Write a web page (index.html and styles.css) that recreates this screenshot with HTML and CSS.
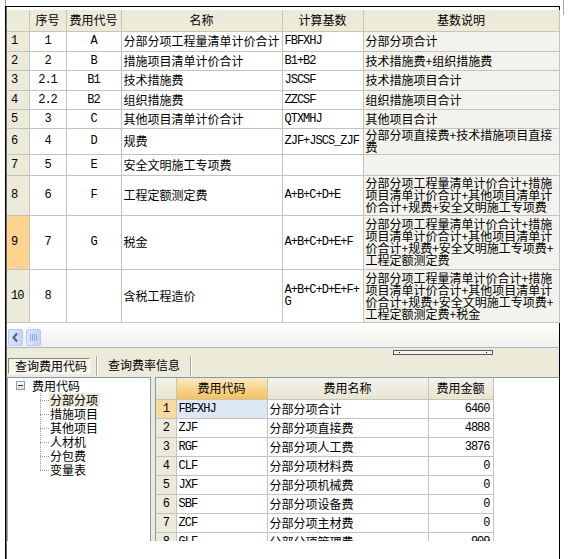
FILE: index.html
```html
<!DOCTYPE html>
<html>
<head>
<meta charset="utf-8">
<link rel="stylesheet" href="styles.css">
</head>
<body>
<div class="frame">
  <table class="main">
    <colgroup>
      <col class="w22"><col class="w37"><col class="w55"><col class="w161"><col class="w81"><col class="w196">
    </colgroup>
    <thead>
      <tr class="hh"><th class="rn"></th><th>序号</th><th>费用代号</th><th>名称</th><th>计算基数</th><th>基数说明</th></tr>
    </thead>
    <tbody>
      <tr class="h20"><td class="rn mono">1</td><td class="mono c">1</td><td class="mono c">A</td><td>分部分项工程量清单计价合计</td><td class="mono">FBFXHJ</td><td class="desc">分部分项合计</td></tr>
      <tr class="h19"><td class="rn mono">2</td><td class="mono c">2</td><td class="mono c">B</td><td>措施项目清单计价合计</td><td class="mono">B1+B2</td><td class="desc">技术措施费+组织措施费</td></tr>
      <tr class="h20"><td class="rn mono">3</td><td class="mono c">2.1</td><td class="mono c">B1</td><td>技术措施费</td><td class="mono">JSCSF</td><td class="desc">技术措施项目合计</td></tr>
      <tr class="h19"><td class="rn mono">4</td><td class="mono c">2.2</td><td class="mono c">B2</td><td>组织措施费</td><td class="mono">ZZCSF</td><td class="desc">组织措施项目合计</td></tr>
      <tr class="h19"><td class="rn mono">5</td><td class="mono c">3</td><td class="mono c">C</td><td>其他项目清单计价合计</td><td class="mono">QTXMHJ</td><td class="desc">其他项目合计</td></tr>
      <tr class="h26"><td class="rn mono">6</td><td class="mono c">4</td><td class="mono c">D</td><td>规费</td><td class="mono">ZJF+JSCS_ZJF</td><td class="desc">分部分项直接费+技术措施项目直接<br>费</td></tr>
      <tr class="h21"><td class="rn mono">7</td><td class="mono c">5</td><td class="mono c">E</td><td>安全文明施工专项费</td><td class="mono"></td><td class="desc"></td></tr>
      <tr class="h40"><td class="rn mono">8</td><td class="mono c">6</td><td class="mono c">F</td><td>工程定额测定费</td><td class="mono">A+B+C+D+E</td><td class="desc">分部分项工程量清单计价合计+措施<br>项目清单计价合计+其他项目清单计<br>价合计+规费+安全文明施工专项费</td></tr>
      <tr class="h54"><td class="rn mono sel">9</td><td class="mono c">7</td><td class="mono c">G</td><td>税金</td><td class="mono">A+B+C+D+E+F</td><td class="desc">分部分项工程量清单计价合计+措施<br>项目清单计价合计+其他项目清单计<br>价合计+规费+安全文明施工专项费+<br>工程定额测定费</td></tr>
      <tr class="h53"><td class="rn mono">10</td><td class="mono c">8</td><td class="mono c"></td><td>含税工程造价</td><td class="mono">A+B+C+D+E+F+<br>G</td><td class="desc">分部分项工程量清单计价合计+措施<br>项目清单计价合计+其他项目清单计<br>价合计+规费+安全文明施工专项费+<br>工程定额测定费+税金</td></tr>
    </tbody>
  </table>

  <div class="hscroll">
    <div class="track">
      <span class="sb-btn"><svg width="15" height="17" viewBox="0 0 15 17"><polyline points="9,4.5 5.5,8.5 9,12.5" fill="none" stroke="#4d6185" stroke-width="2"/></svg></span>
      <span class="sb-thumb"><svg width="15" height="17" viewBox="0 0 15 17"><g stroke="#8ea7dc" stroke-width="1"><line x1="4.5" y1="5" x2="4.5" y2="12"/><line x1="6.5" y1="5" x2="6.5" y2="12"/><line x1="8.5" y1="5" x2="8.5" y2="12"/><line x1="10.5" y1="5" x2="10.5" y2="12"/></g></svg></span>
    </div>
  </div>

  <div class="panel">
    <div class="grip-row"><span class="grip"><i></i><i></i></span></div>
    <div class="tabs">
      <span class="tab active">查询费用代码</span>
      <span class="sep"></span>
      <span class="tab">查询费率信息</span>
      <span class="sep"></span>
    </div>
  </div>

  <div class="lower">
    <div class="tree">
      <div class="node root"><span class="minus"></span><span class="lbl">费用代码</span></div>
      <div class="node child"><span class="conn"></span><span class="lbl on">分部分项</span></div>
      <div class="node child"><span class="conn"></span><span class="lbl">措施项目</span></div>
      <div class="node child"><span class="conn"></span><span class="lbl">其他项目</span></div>
      <div class="node child"><span class="conn"></span><span class="lbl">人材机</span></div>
      <div class="node child"><span class="conn"></span><span class="lbl">分包费</span></div>
      <div class="node child last"><span class="conn"></span><span class="lbl">变量表</span></div>
    </div>
    <div class="subgrid">
      <table class="sub">
        <colgroup><col class="w20"><col class="w91"><col class="w161"><col class="w65"></colgroup>
        <thead>
          <tr class="sh"><th class="rn"></th><th class="hot">费用代码</th><th>费用名称</th><th>费用金额</th></tr>
        </thead>
        <tbody>
          <tr><td class="rn mono sel">1</td><td class="mono cur">FBFXHJ</td><td>分部分项合计</td><td class="mono r">6460</td></tr>
          <tr><td class="rn mono">2</td><td class="mono">ZJF</td><td>分部分项直接费</td><td class="mono r">4888</td></tr>
          <tr><td class="rn mono">3</td><td class="mono">RGF</td><td>分部分项人工费</td><td class="mono r">3876</td></tr>
          <tr><td class="rn mono">4</td><td class="mono">CLF</td><td>分部分项材料费</td><td class="mono r">0</td></tr>
          <tr><td class="rn mono">5</td><td class="mono">JXF</td><td>分部分项机械费</td><td class="mono r">0</td></tr>
          <tr><td class="rn mono">6</td><td class="mono">SBF</td><td>分部分项设备费</td><td class="mono r">0</td></tr>
          <tr><td class="rn mono">7</td><td class="mono">ZCF</td><td>分部分项主材费</td><td class="mono r">0</td></tr>
          <tr><td class="rn mono">8</td><td class="mono">GLF</td><td>分部分项管理费</td><td class="mono r">909</td></tr>
        </tbody>
      </table>
    </div>
  </div>
</div>
</body>
</html>
```

FILE: styles.css
```css
* { box-sizing: border-box; }
html, body { margin: 0; padding: 0; background: #fff; }
body {
  width: 570px;
  height: 559px;
  overflow: hidden;
  font-family: "Noto Sans CJK SC", sans-serif;
  font-size: 12px;
  color: #000;
}

.frame {
  position: relative;
  margin: 6px 0 0 5px;
  width: 555px;
  height: 553px;
  border-top: 1px solid #000;
  border-left: 1px solid #000;
  border-right: 1px solid #000;
  padding: 3px 0 0 1px;
  background: #fff;
  box-shadow: inset 1px 0 0 #6b6b6b;
}
.frame::before {
  content: "";
  position: absolute;
  left: -1px; top: -7px;
  width: 1px; height: 6px;
  background: #9a9a9a;
}
.frame::after {
  content: "";
  position: absolute;
  left: 557px; top: -7px;
  width: 1px; height: 15px;
  background: #a8a8a8;
}

/* ---------- main grid ---------- */
.main {
  width: 552px;
  border-collapse: collapse;
  table-layout: fixed;
}
.w22 { width: 22px; } .w37 { width: 37px; } .w55 { width: 55px; }
.w161 { width: 161px; } .w81 { width: 81px; } .w196 { width: 196px; }
.w20 { width: 20px; } .w91 { width: 91px; } .w65 { width: 65px; }

.main th, .main td {
  border: 1px solid #c3c3c3;
  padding: 0 2px;
  line-height: 12px;
  white-space: nowrap;
  overflow: hidden;
  vertical-align: middle;
  text-align: left;
  font-weight: normal;
}
.main tr > :first-child { border-left: none; }
.main thead th { border-top: none; }
.main th {
  background: #ecead9;
  text-align: center;
  border-color: #c8c5b4;
}
.hh { height: 21px; }
.h19 { height: 19px; } .h20 { height: 20px; } .h21 { height: 21px; }
.h26 { height: 26px; } .h40 { height: 40px; } .h54 { height: 54px; } .h53 { height: 53px; }

.mono {
  font-family: "Liberation Mono", monospace;
  font-size: 12px;
  letter-spacing: -1px;
  color: #000;
}
.c { text-align: center !important; }
.r { text-align: right !important; }
td.rn {
  background: #ecead9;
  padding-left: 4px;
}
td.rn.sel { background: #fdd38e; }
.desc { background: #f3f2ed; }

/* ---------- horizontal scrollbar ---------- */
.hscroll {
  height: 24px;
  padding-top: 3px;
}
.track {
  height: 21px;
  display: flex;
  align-items: flex-start;
  gap: 3px;
  padding: 3px 0 0 1px;
  background: linear-gradient(#fcfcfa, #f1f0ea);
}
.sb-btn, .sb-thumb {
  display: block;
  width: 15px;
  height: 17px;
  border: 1px solid #b6c8f2;
  border-radius: 2px;
  background: linear-gradient(90deg, #dce6fd, #c4d4fa);
  line-height: 0;
}
.sb-btn svg, .sb-thumb svg { margin: -1px 0 0 -1px; }

/* ---------- tab panel ---------- */
.panel {
  height: 30px;
  border-top: 1px solid #aab6c4;
  background: #ecead9;
  padding-top: 2px;
}
.grip-row { height: 5px; padding-left: 386px; }
.grip {
  display: flex;
  justify-content: space-between;
  align-items: center;
  width: 100px;
  height: 5px;
  border: 1px solid #5a5a5a;
  background: #f4f4f0;
  padding: 0 5px;
}
.grip i { display: block; width: 1px; height: 1px; background: #000; }
.tabs {
  display: flex;
  align-items: center;
  height: 20px;
  margin-top: 1px;
  padding-left: 1px;
}
.tab {
  height: 16px;
  line-height: 14px;
  white-space: nowrap;
  padding: 0 10px 0 10px;
}
.tab.active {
  width: 82px;
  padding: 0 2px 0 6px;
  border: 1px solid;
  border-color: #8a8778 #ffffff #ffffff #8a8778;
  background: #f4f3ec;
}
.sep {
  width: 2px;
  height: 20px;
  border-left: 1px solid #aca899;
  border-right: 1px solid #fff;
}
.tab.active + .sep { margin-left: 6px; }

/* ---------- lower area ---------- */
.lower {
  display: flex;
  gap: 4px;
  height: 164px;
  background: #ecead9;
}
.tree {
  width: 144px;
  flex: none;
  background: #fff;
  border-top: 1px solid #7f9db9;
  border-left: 1px solid #a7a7a7;
  border-right: 1px solid #7f9db9;
  padding-top: 1px;
}
.node {
  display: flex;
  align-items: center;
  height: 14px;
  line-height: 14px;
}
.root { padding-left: 8px; }
.minus {
  width: 9px; height: 9px;
  flex: none;
  border: 1px solid #8b9aad;
  background: linear-gradient(#333, #333) center / 5px 1px no-repeat, linear-gradient(#fff, #dcdcd8);
  margin-right: 7px;
}
.child { padding-left: 32px; }
.conn {
  width: 9px; height: 14px;
  flex: none;
  background:
    repeating-linear-gradient(to right, #9a9a9a 0 1px, transparent 1px 2px) 0 7px / 9px 1px no-repeat,
    repeating-linear-gradient(to bottom, #9a9a9a 0 1px, transparent 1px 2px) 0 0 / 1px 14px no-repeat;
}
.last .conn { background-size: 9px 1px, 1px 8px; }
.lbl { padding: 0 2px 0 1px; white-space: nowrap; }
.root .lbl { padding: 0; }
.lbl.on { background: #ecead9; }

.subgrid {
  flex: 1;
  background: #fff;
  border-top: 1px solid #7f9db9;
  border-left: 1px solid #7f9db9;
  overflow: hidden;
}
.sub {
  width: 337px;
  border-collapse: collapse;
  table-layout: fixed;
}
.sub th, .sub td {
  border: 1px solid #c3c3c3;
  height: 19px;
  padding: 0 2px;
  line-height: 12px;
  white-space: nowrap;
  overflow: hidden;
  text-align: left;
  font-weight: normal;
}
.sub tr > :first-child { border-left: none; }
.sub thead th { border-top: none; height: 22px; }
.sub th {
  background: linear-gradient(#f4f3ea, #e7e4d3);
  text-align: center;
  border-color: #c8c5b4;
}
.sub th.hot { background: linear-gradient(#fce9bd, #f3c061); }
.sub td.rn { text-align: center; padding: 0; }
.sub td.rn.sel { background: #f9d9a0; }
.sub td.cur { background: #dde8f5; }
.sub td.r { padding-right: 3px; }
```
